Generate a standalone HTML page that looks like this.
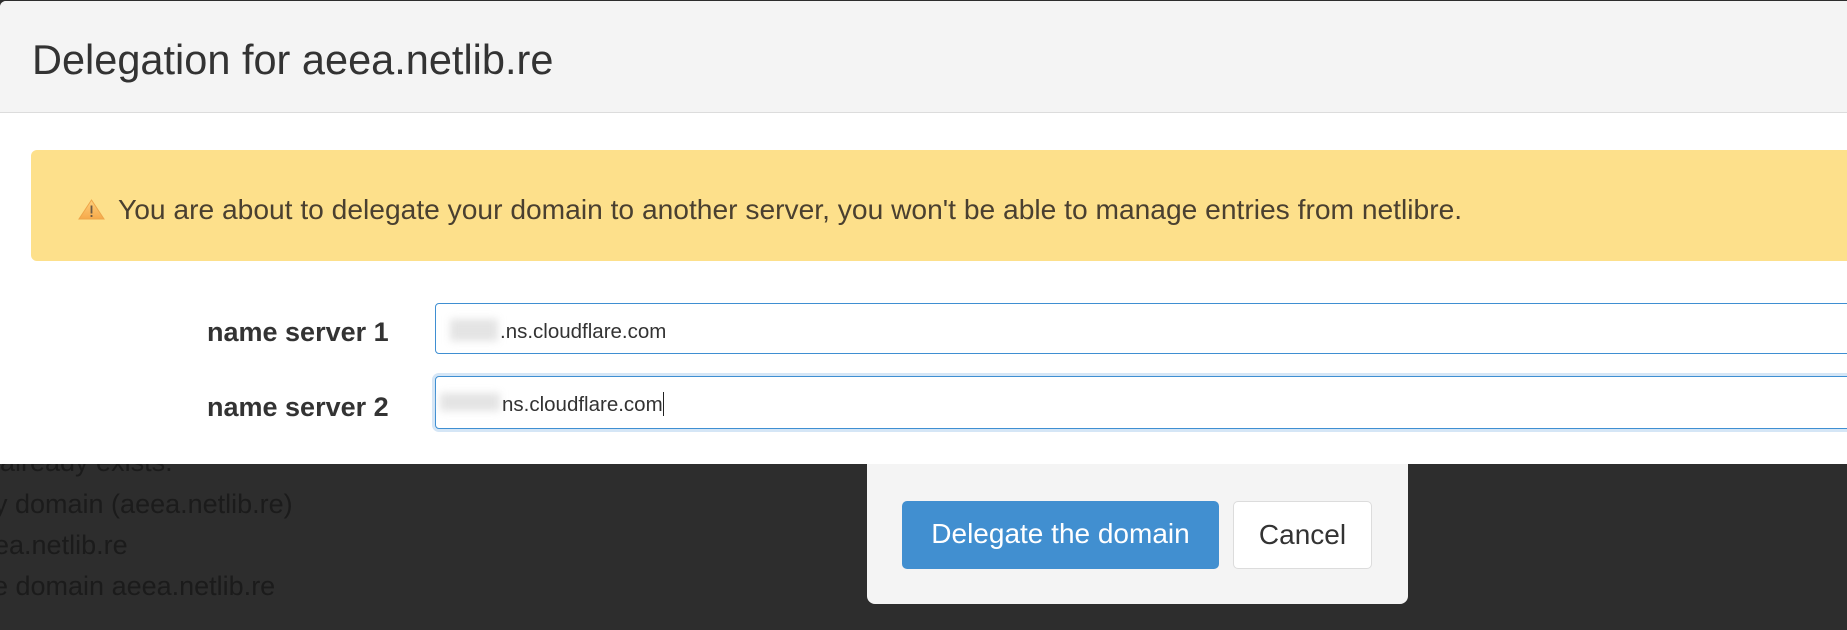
<!DOCTYPE html>
<html><head><meta charset="utf-8"><style>
html,body{margin:0;padding:0;width:1847px;height:630px;overflow:hidden;background:#2d2d2d;font-family:"Segoe UI","Liberation Sans",sans-serif;position:relative}
.bgtxt{position:absolute;left:0;color:#1b1b1b;font-size:27px;white-space:nowrap}
.modal{position:absolute;left:0;top:1px;width:1847px;height:463px;background:#fff;border-top-left-radius:6px;overflow:hidden}
.hdr{position:absolute;left:0;top:0;width:100%;height:111px;background:#f4f4f4;border-bottom:1px solid #dcdcdc}
.title{position:absolute;left:32px;top:31px;font-size:41.5px;color:#333;white-space:nowrap;line-height:56px}
.alert{position:absolute;left:31px;top:149px;width:1850px;height:111px;background:#fde08b;border-radius:6px}
.atxt{position:absolute;left:118px;top:190px;font-size:28.2px;color:#4a4030;white-space:nowrap;line-height:36px}
.lbl{position:absolute;left:207px;font-size:27px;font-weight:bold;color:#333;white-space:nowrap;line-height:30px}
.inp{position:absolute;left:435px;width:1420px;background:#fff;border:1px solid #3f8fd2;border-radius:4px;box-sizing:border-box}
.itxt{position:absolute;left:500px;font-size:20.5px;color:#333;white-space:nowrap;line-height:26px}
.blur{position:absolute;background:#e4e4e4;filter:blur(4px)}
.footer{position:absolute;left:867px;top:464px;width:541px;height:140px;background:#f4f4f4;border-radius:0 0 8px 8px}
.btn{position:absolute;top:501px;height:68px;border-radius:5px;box-sizing:border-box;font-size:28px;line-height:66px;text-align:center;white-space:nowrap}
</style></head><body>
<div class="bgtxt" style="top:447px">already exists.</div>
<div class="bgtxt" style="top:489px;left:-6px">y domain (aeea.netlib.re)</div>
<div class="bgtxt" style="top:530px;left:-6px">ea.netlib.re</div>
<div class="bgtxt" style="top:571px;left:-7px">e domain aeea.netlib.re</div>

<div class="modal">
  <div class="hdr"></div>
  <div class="title">Delegation for aeea.netlib.re</div>
  <div class="alert"></div>
  <svg style="position:absolute;left:78px;top:198px" width="27" height="21" viewBox="0 0 27 21"><defs><linearGradient id="g" x1="0" y1="0" x2="0" y2="1"><stop offset="0" stop-color="#ffd07a"/><stop offset="1" stop-color="#f6a94a"/></linearGradient></defs><path d="M13.5 1 L26 20 L1 20 Z" fill="url(#g)" stroke="#eea64a" stroke-width="1"/><rect x="12.6" y="6.5" width="1.8" height="8" fill="#6b5a45"/><rect x="12.6" y="16" width="1.8" height="2" fill="#6b5a45"/></svg>
  <div class="atxt">You are about to delegate your domain to another server, you won't be able to manage entries from netlibre.</div>

  <div class="lbl" style="top:316px">name server 1</div>
  <div class="lbl" style="top:391px">name server 2</div>
  <div class="inp" style="top:302px;height:51px"></div>
  <div class="inp" style="top:375px;height:53px;box-shadow:0 0 0 3px #d5e6f6"></div>
  <div class="blur" style="left:450px;top:318px;width:48px;height:22px"></div>
  <div class="blur" style="left:440px;top:392px;width:60px;height:18px"></div>
  <div class="itxt" style="top:318px">.ns.cloudflare.com</div>
  <div class="itxt" style="top:391px;left:502px">ns.cloudflare.com<span style="display:inline-block;width:1px;height:24px;background:#222;vertical-align:-5px"></span></div>
</div>

<div class="footer"></div>
<div class="btn" style="left:902px;width:317px;background:#418fd0;color:#fff">Delegate the domain</div>
<div class="btn" style="left:1233px;width:139px;background:#fff;border:1px solid #dcdcdc;color:#333">Cancel</div>
</body></html>
